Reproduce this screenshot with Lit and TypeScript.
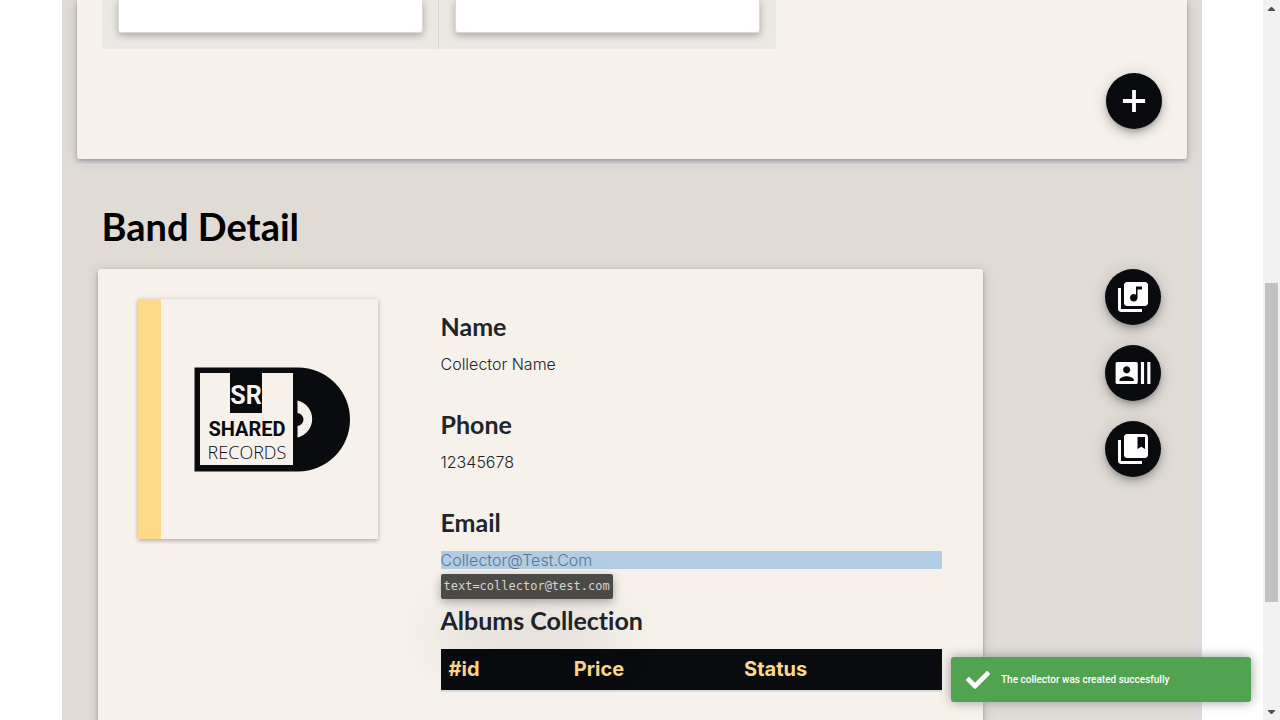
import { LitElement, html, css, svg } from "lit";
import { customElement, property } from "lit/decorators.js";
import { classMap } from "lit/directives/class-map.js";

const ICONS: Record<string, string> = {
  add: "M19 13.200h-5.800v5.800h-2.400v-5.800H5v-2.400h5.800V5h2.400v5.800H19z",
  albums:
    "M20 2H8c-1.1 0-2 .9-2 2v12c0 1.1.9 2 2 2h12c1.1 0 2-.9 2-2V4c0-1.1-.9-2-2-2zm-2 5h-3v5.5c0 1.38-1.12 2.5-2.5 2.5S10 13.88 10 12.5s1.12-2.5 2.5-2.5c.57 0 1.08.19 1.5.51V5h4v2zM4 6H2v14c0 1.1.9 2 2 2h14v-2H4V6z",
  performers:
    "M21 5v14h2V5h-2zm-4 14h2V5h-2v14zM14 5H2c-.55 0-1 .45-1 1v12c0 .55.45 1 1 1h12c.55 0 1-.45 1-1V6c0-.55-.45-1-1-1zM8 7.75c1.24 0 2.25 1.01 2.25 2.25S9.24 12.25 8 12.25 5.75 11.24 5.75 10 6.76 7.75 8 7.75zM12.5 17h-9v-.75c0-1.5 3-2.25 4.5-2.25s4.5.75 4.5 2.25V17z",
  collections:
    "M4 6H2v14c0 1.1.9 2 2 2h14v-2H4V6zM20 2H8c-1.1 0-2 .9-2 2v12c0 1.1.9 2 2 2h12c1.1 0 2-.9 2-2V4c0-1.1-.9-2-2-2zm0 10l-2.5-1.5L15 12V4h5v8z",
};

@customElement("fab-button")
export class FabButton extends LitElement {
  @property() icon = "add";
  @property() label = "";

  static styles = css`
    :host {
      display: block;
    }
    .fab {
      display: flex;
      align-items: center;
      justify-content: center;
      width: 56px;
      height: 56px;
      padding: 0;
      border: 0;
      border-radius: 50%;
      background: #0a0b0f;
      color: #fff;
      cursor: pointer;
      box-shadow: 0 3px 5px -1px rgba(0, 0, 0, 0.2),
        0 6px 10px rgba(0, 0, 0, 0.14), 0 1px 18px rgba(0, 0, 0, 0.12);
    }
    .glyph {
      width: 38px;
      height: 38px;
      fill: currentColor;
    }
    .stacked {
      width: 36px;
      height: 36px;
    }
  `;

  render() {
    const stacked = this.icon === "albums" || this.icon === "collections";
    return html`<button class="fab" type="button" aria-label=${this.label}>
      <svg class=${classMap({ glyph: true, stacked })} viewBox="0 0 24 24" aria-hidden="true">
        ${svg`<path d=${ICONS[this.icon]}></path>`}
      </svg>
    </button>`;
  }
}

@customElement("record-logo")
export class RecordLogo extends LitElement {
  static styles = css`
    :host {
      display: block;
    }
    .logo {
      display: block;
      width: 100%;
    }
    .ink {
      fill: #0a0b0f;
    }
    .paper {
      fill: #f6f1eb;
    }
    .initials,
    .shared {
      font-family: Roboto, sans-serif;
      font-weight: 700;
      text-anchor: middle;
    }
    .initials {
      font-size: 25px;
    }
    .shared {
      font-size: 20px;
    }
    .records {
      font-family: "Open Sans", sans-serif;
      font-weight: 300;
      font-size: 18px;
      text-anchor: middle;
    }
  `;

  render() {
    return html`<svg class="logo" viewBox="0 0 240 240" role="img" aria-label="Shared Records">
      <path class="ink" d="M56.500 68.500H160A52 52 0 0 1 160 172.500H56.500Z"></path>
      <rect class="paper" x="62" y="74" width="93" height="92"></rect>
      <path class="paper" d="M159.500 101.500A19 19 0 0 1 159.500 138.500Z"></path>
      <path class="ink" d="M159 114A6.500 6.500 0 0 1 159 127Z"></path>
      <rect class="ink" x="92" y="73" width="32" height="41"></rect>
      <text class="paper initials" x="108" y="105">SR</text>
      <text class="ink shared" x="109" y="137">SHARED</text>
      <text class="ink records" x="109" y="160">RECORDS</text>
    </svg>`;
  }
}

@customElement("app-root")
export class AppRoot extends LitElement {
  private fields = [
    { name: "Name", value: "Collector Name", hint: "" },
    { name: "Phone", value: "12345678", hint: "" },
    { name: "Email", value: "Collector@Test.Com", hint: "text=collector@test.com" },
  ];

  static styles = css`
    :host {
      display: block;
      font-family: Inter, sans-serif;
      color: #212529;
    }
    .window {
      position: relative;
      display: flex;
      height: 100vh;
      background: #fff;
      overflow: hidden;
    }
    .view {
      flex: 1;
      min-width: 0;
      overflow: hidden;
    }
    .container {
      box-sizing: border-box;
      width: 100%;
      max-width: 1140px;
      min-height: 100%;
      margin: 0 auto;
      background: #e0dbd5;
    }
    .panel {
      background: #f6f1eb;
      border-radius: 3px;
      box-shadow: 0 2px 4px rgba(0, 0, 0, 0.26), 0 1px 14px rgba(0, 0, 0, 0.12);
    }
    .list {
      margin: 0 15px 5px;
      padding: 0 25px 30px;
      border-radius: 0 0 3px 3px;
    }
    .albums {
      display: grid;
      grid-template-columns: repeat(2, 337px);
      margin-bottom: 24px;
    }
    .cell {
      padding: 0 16px 16px;
      background: #ebe8e3;
    }
    .cell:first-child {
      box-shadow: inset -1px 0 #d9d6d2;
    }
    .album {
      height: 32px;
      border: 1px solid #dadada;
      border-top: 0;
      border-radius: 0 0 3px 3px;
      background: #fff;
      box-shadow: 0 3px 6px rgba(0, 0, 0, 0.2), 0 1px 12px rgba(0, 0, 0, 0.08);
    }
    .actions {
      display: flex;
      justify-content: flex-end;
    }
    .detail {
      margin: 0 5px;
      padding: 36px 35px 0 30px;
      border: 1px solid #d9dce2;
      border-bottom: 0;
    }
    .title {
      margin: 0 0 18px;
      padding-left: 4px;
      font: 700 38px/50px Lato, sans-serif;
      color: #000;
    }
    .row {
      display: flex;
      align-items: flex-start;
      justify-content: space-between;
      gap: 40px;
    }
    .card {
      display: flex;
      flex: 0 1 885px;
      box-sizing: border-box;
      gap: 63px;
      min-height: 480px;
      padding: 30px 41px 30px 40px;
    }
    .cover {
      flex: none;
      width: 240px;
      height: 240px;
      background: linear-gradient(90deg, #ffd98a 23px, #f6f1eb 23px);
      box-shadow: 0 2px 4px rgba(0, 0, 0, 0.22), 0 0 6px rgba(0, 0, 0, 0.1);
    }
    .info {
      flex: 1;
      min-width: 0;
      padding-top: 12px;
    }
    .fields {
      margin: 0;
    }
    .heading {
      margin: 0 0 14px;
      font: 700 25px/30px Lato, sans-serif;
      font-variant-ligatures: none;
    }
    .value {
      position: relative;
      margin: 0 0 36px;
      font-size: 16px;
      font-weight: 300;
      line-height: 18px;
    }
    .marked {
      background: #b2cce4;
      color: #5c7690;
    }
    .hint {
      position: absolute;
      top: 100%;
      left: 0;
      margin-top: 5px;
      padding: 0 3px;
      border-radius: 2px;
      background: #4b4a47;
      color: #d4d3d1;
      font: 12px/25px "DejaVu Sans Mono", monospace;
      white-space: nowrap;
      box-shadow: 0 3px 10px rgba(0, 0, 0, 0.3), 0 46px 60px rgba(0, 0, 0, 0.18);
    }
    .prices {
      width: 100%;
      border-collapse: separate;
      border-spacing: 0;
      table-layout: fixed;
      border-bottom: 2px solid #dcdcdd;
      text-align: left;
    }
    .prices th {
      box-sizing: border-box;
      padding: 0 8px 1px;
      background: #0a0b0f;
      color: #ffd98a;
      font-size: 20px;
      font-weight: 700;
      line-height: 40px;
    }
    .narrow {
      width: 25%;
    }
    .medium {
      width: 34%;
    }
    .tabs {
      display: grid;
      gap: 20px;
    }
    .toast {
      position: absolute;
      right: 29px;
      bottom: 18px;
      display: flex;
      align-items: center;
      gap: 11px;
      box-sizing: border-box;
      width: 300px;
      padding: 10px 15px;
      border-radius: 3px;
      background: #51a351;
      color: #fff;
      font: 500 10px/25px Roboto, sans-serif;
      box-shadow: 0 0 12px #999;
    }
    .check {
      width: 24px;
      height: 24px;
      fill: #fff;
    }
    .scrollbar {
      display: grid;
      grid-template-rows: 17px 266fr 319fr 101fr 17px;
      justify-items: center;
      align-items: center;
      width: 17px;
      background: #f1f1f1;
    }
    .thumb {
      grid-row: 3;
      width: 13px;
      height: 100%;
      background: #c1c1c1;
    }
    .arrow {
      width: 7px;
      height: 4px;
      fill: #505050;
    }
    .down {
      grid-row: 5;
    }
  `;

  render() {
    return html`
      <div class="window">
        <main class="view">
          <div class="container">
            <section class="panel list">
              <div class="albums">
                <div class="cell"><div class="album"></div></div>
                <div class="cell"><div class="album"></div></div>
              </div>
              <div class="actions">
                <fab-button icon="add" label="Add"></fab-button>
              </div>
            </section>
            <section class="detail">
              <h1 class="title">Band Detail</h1>
              <div class="row">
                <article class="panel card">
                  <record-logo class="cover"></record-logo>
                  <div class="info">
                    <dl class="fields">
                      ${this.fields.map(
                        (f) => html`<dt class="heading">${f.name}</dt>
                          <dd class="value ${f.hint ? "marked" : ""}">
                            ${f.value}${f.hint ? html`<span class="hint">${f.hint}</span>` : ""}
                          </dd>`
                      )}
                    </dl>
                    <h2 class="heading" id="albums-heading">Albums Collection</h2>
                    <table class="prices" aria-labelledby="albums-heading">
                      <thead>
                        <tr>
                          <th class="narrow" scope="col">#id</th>
                          <th class="medium" scope="col">Price</th>
                          <th scope="col">Status</th>
                        </tr>
                      </thead>
                    </table>
                  </div>
                </article>
                <nav class="tabs">
                  <fab-button icon="albums" label="Albums"></fab-button>
                  <fab-button icon="performers" label="Performers"></fab-button>
                  <fab-button icon="collections" label="Collections"></fab-button>
                </nav>
              </div>
            </section>
          </div>
        </main>
        <div class="scrollbar" aria-hidden="true">
          <svg class="arrow" viewBox="0 0 7 4"><path d="M3 0h1l3 3v1H0V3z"></path></svg>
          <div class="thumb"></div>
          <svg class="arrow down" viewBox="0 0 7 4"><path d="M0 0h7v1L4 4H3L0 1z"></path></svg>
        </div>
        <div class="toast" role="status">
          <svg class="check" viewBox="0 0 512 512" aria-hidden="true">
            <path
              d="M173.898 439.404l-166.400-166.400c-9.997-9.997-9.997-26.206 0-36.204l36.203-36.204c9.997-9.998 26.207-9.998 36.204 0L192 312.690 432.095 72.596c9.997-9.997 26.207-9.997 36.204 0l36.203 36.204c9.997 9.997 9.997 26.206 0 36.204l-294.400 294.401c-9.998 9.997-26.207 9.997-36.204-.001z"
            ></path>
          </svg>
          <span>The collector was created succesfully</span>
        </div>
      </div>
    `;
  }
}
